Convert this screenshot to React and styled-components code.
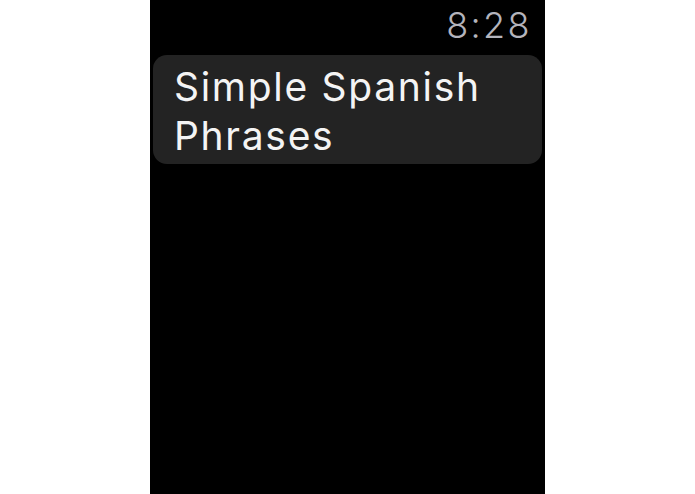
import React from "react";
import styled, { createGlobalStyle } from "styled-components";

const GlobalStyle = createGlobalStyle`
    html, body {
        margin: 0;
        padding: 0;
        background: #ffffff;
    }
    #root {
        height: 494px;
    }
`;

export default function App() {
    return (
        <>
            <GlobalStyle />
            <Page>
                <Watch>
                    <StatusBar>
                        <Time>8:28</Time>
                    </StatusBar>
                    <ListItem>
                        <ItemTitle>Simple Spanish Phrases</ItemTitle>
                    </ListItem>
                </Watch>
            </Page>
        </>
    );
}

const Page = styled.div`
    height: 494px;
    display: flex;
    justify-content: center;
    background: #ffffff;
`;

const Watch = styled.div`
    width: 395px;
    height: 100%;
    background: #000000;
    display: flex;
    flex-direction: column;
    padding: 0 3px;
    box-sizing: border-box;
    font-family: Inter, "Liberation Sans", sans-serif;
`;

const StatusBar = styled.div`
    height: 55px;
    display: flex;
    justify-content: flex-end;
    align-items: flex-start;
    padding-right: 10px;
`;

const Time = styled.span`
    color: #b4b4bc;
    font-size: 36px;
    font-weight: 300;
    line-height: 1;
    margin-top: 7px;
    letter-spacing: 2.4px;
`;

const ListItem = styled.div`
    background: #232323;
    border-radius: 14px;
    height: 109px;
    padding: 7px 10px 0 21px;
    box-sizing: border-box;
`;

const ItemTitle = styled.h3`
    margin: 0;
    color: #f4f4f4;
    font-weight: 400;
    font-size: 39px;
    line-height: 49px;
    letter-spacing: 1.7px;
`;
